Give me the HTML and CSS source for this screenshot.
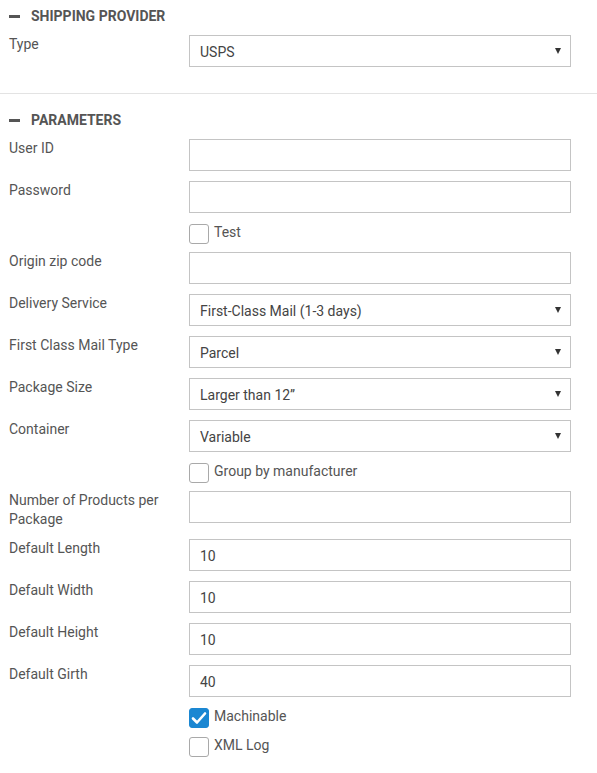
FILE: index.html
```html
<!DOCTYPE html>
<html>
<head>
<meta charset="utf-8">
<link rel="stylesheet" href="styles.css">
</head>
<body>
<div class="panel">
  <section class="section first">
    <h2 class="section-title"><span class="dash"></span>SHIPPING PROVIDER</h2>
    <div class="row">
      <label class="label">Type</label>
      <div class="field select"><span class="value">USPS</span></div>
    </div>
  </section>
  <section class="section second">
    <h2 class="section-title"><span class="dash"></span>PARAMETERS</h2>
    <div class="row"><label class="label">User ID</label><div class="field"></div></div>
    <div class="row"><label class="label">Password</label><div class="field"></div></div>
    <div class="row check-row"><span class="label"></span><span class="box"></span><span class="check-text">Test</span></div>
    <div class="row"><label class="label">Origin zip code</label><div class="field"></div></div>
    <div class="row"><label class="label">Delivery Service</label><div class="field select"><span class="value">First-Class Mail (1-3 days)</span></div></div>
    <div class="row"><label class="label">First Class Mail Type</label><div class="field select"><span class="value">Parcel</span></div></div>
    <div class="row"><label class="label">Package Size</label><div class="field select"><span class="value">Larger than 12”</span></div></div>
    <div class="row"><label class="label">Container</label><div class="field select"><span class="value">Variable</span></div></div>
    <div class="row check-row"><span class="label"></span><span class="box"></span><span class="check-text">Group by manufacturer</span></div>
    <div class="row"><label class="label">Number of Products per Package</label><div class="field"></div></div>
    <div class="row"><label class="label">Default Length</label><div class="field"><span class="value">10</span></div></div>
    <div class="row"><label class="label">Default Width</label><div class="field"><span class="value">10</span></div></div>
    <div class="row"><label class="label">Default Height</label><div class="field"><span class="value">10</span></div></div>
    <div class="row"><label class="label">Default Girth</label><div class="field"><span class="value">40</span></div></div>
    <div class="row check-row"><span class="label"></span><span class="box checked"><svg width="20" height="20" viewBox="0 0 20 20"><path d="M4 10.5 L8 14.5 L16 5.5" fill="none" stroke="#fff" stroke-width="2.6" stroke-linecap="round" stroke-linejoin="round"/></svg></span><span class="check-text">Machinable</span></div>
    <div class="row check-row"><span class="label"></span><span class="box"></span><span class="check-text">XML Log</span></div>
  </section>
</div>
</body>
</html>
```

FILE: styles.css
```css
* { box-sizing: border-box; }
html, body { margin: 0; padding: 0; background: #fff; }
body {
  font-family: Roboto, "Liberation Sans", Arial, sans-serif;
  font-size: 14px;
  color: #555;
  width: 597px;
}
.panel { display: flex; flex-direction: column; }
.section { padding-left: 9px; padding-right: 26px; }
.section.first { padding-top: 6px; padding-bottom: 26px; border-bottom: 1px solid #e3e3e3; }
.section.first .row { margin-bottom: 0; }
.section.second { padding-top: 16px; }
.section-title {
  margin: 0 0 9px 0;
  display: flex;
  align-items: center;
  font-size: 14px;
  font-weight: 700;
  color: #555;
  line-height: 20px;
}
.dash {
  display: inline-block;
  width: 11px;
  height: 3px;
  background: #555;
  margin-right: 11px;
}
.row {
  display: flex;
  align-items: flex-start;
  margin-bottom: 10px;
}
.label {
  width: 180px;
  flex: 0 0 180px;
  line-height: 19px;
  color: #555;
  padding-right: 20px;
}
.field {
  position: relative;
  flex: 1;
  height: 32px;
  border: 1px solid #c4c4c4;
  background: #fff;
  display: flex;
  align-items: center;
  padding-left: 10px;
  color: #444;
}
.value { line-height: 20px; padding-top: 1px; }
.select::after {
  content: "";
  position: absolute;
  right: 9px;
  top: 12px;
  border-left: 3px solid transparent;
  border-right: 3px solid transparent;
  border-top: 6px solid #333;
}
.check-row { height: 19px; align-items: center; }
.box {
  width: 20px;
  height: 20px;
  flex: 0 0 20px;
  border: 1px solid #a9a9a9;
  border-radius: 3px;
  background: #fff;
  margin-top: 2px;
  position: relative;
}
.box.checked {
  background: #1b87d2;
  border-color: #1b87d2;
}
.box svg { position: absolute; left: -1px; top: -1px; }
.check-text { margin-left: 5px; line-height: 19px; color: #555; }
```
